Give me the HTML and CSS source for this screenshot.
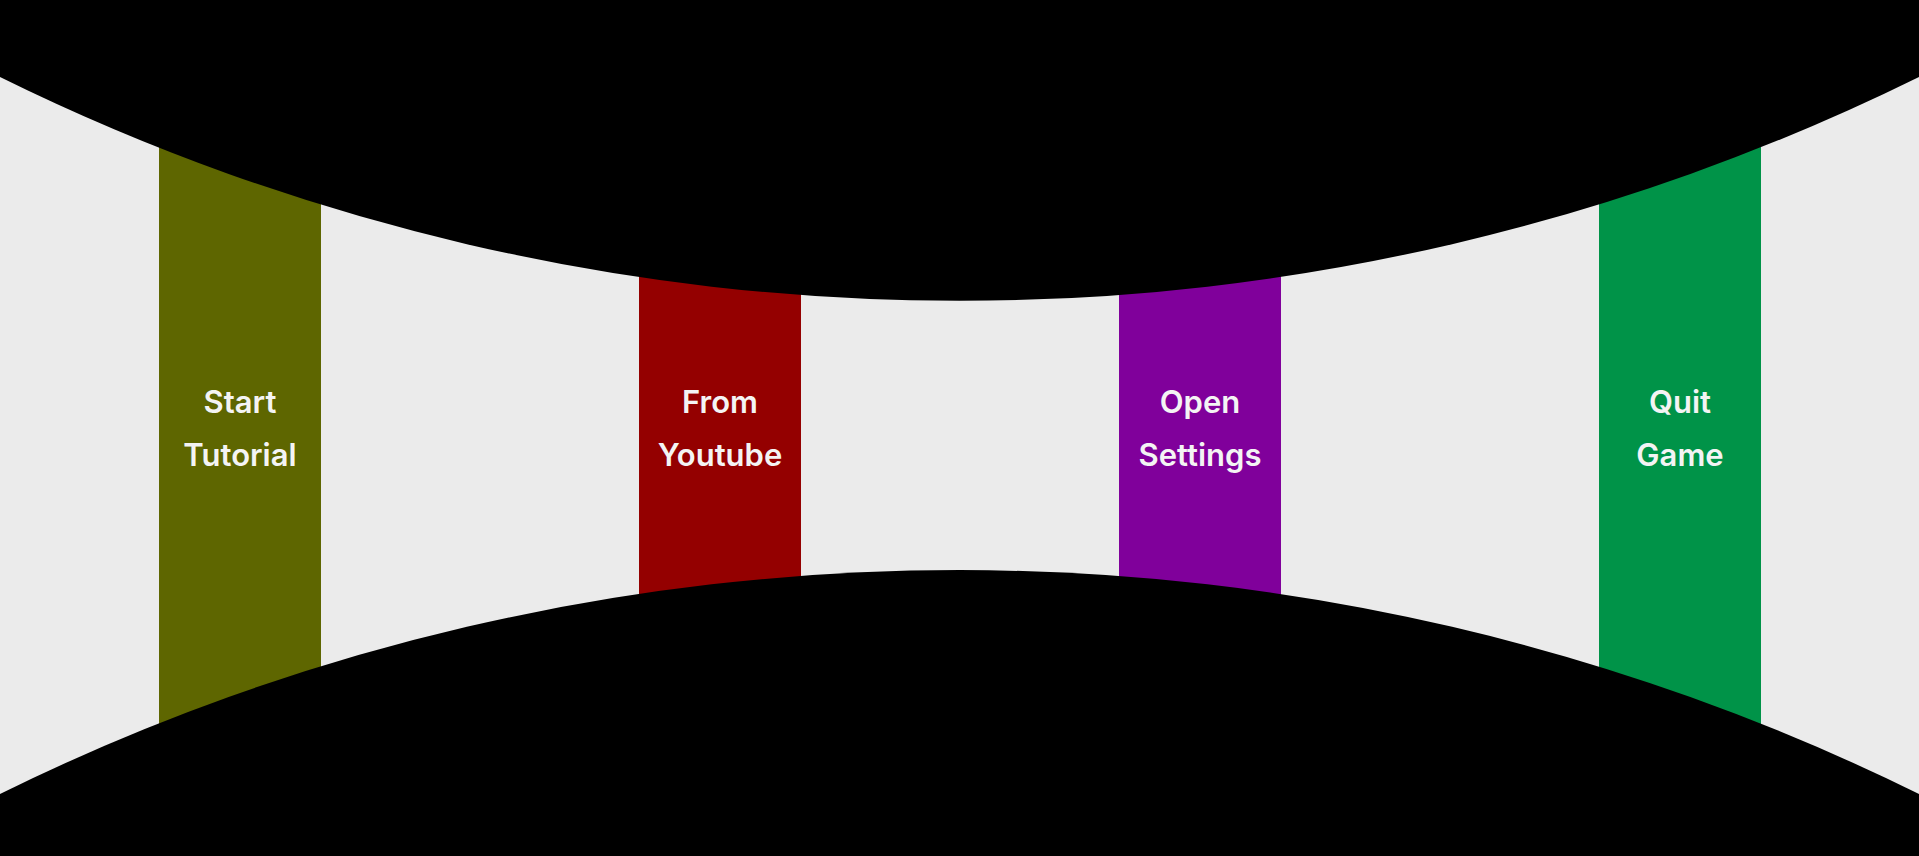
FILE: index.html
```html
<!DOCTYPE html>
<html lang="en">
<head>
<meta charset="utf-8">
<title>Main Menu</title>
<link rel="stylesheet" href="styles.css">
</head>
<body>
<main class="scene">
  <nav class="menu" aria-label="Main menu">
    <button class="stripe stripe-tutorial" type="button"><span>Start</span> <span>Tutorial</span></button>
    <button class="stripe stripe-youtube" type="button"><span>From</span> <span>Youtube</span></button>
    <button class="stripe stripe-settings" type="button"><span>Open</span> <span>Settings</span></button>
    <button class="stripe stripe-quit" type="button"><span>Quit</span> <span>Game</span></button>
  </nav>
  <svg class="curve curve-top" viewBox="0 0 1919 301" preserveAspectRatio="none" aria-hidden="true">
    <path d="M0 0V77A2168 2168 0 0 0 1919 77V0Z"/>
  </svg>
  <svg class="curve curve-bottom" viewBox="0 0 1919 286" preserveAspectRatio="none" aria-hidden="true">
    <path d="M0 286V224A2168 2168 0 0 1 1919 224V286Z"/>
  </svg>
</main>
</body>
</html>
```
FILE: styles.css
```css
body {
  margin: 0;
  background: #000000;
}

.scene {
  position: relative;
  display: grid;
  height: 100vh;
  overflow: hidden;
  background: #ebebeb;
}

.menu {
  display: grid;
  grid-template-columns: repeat(4, 1fr);
  justify-items: center;
  margin-right: -1px;
}

.stripe {
  display: flex;
  flex-direction: column;
  align-items: center;
  justify-content: center;
  width: 162px;
  padding: 0;
  border: 0;
  color: #f4f4f4;
  font-family: Inter, "Liberation Sans", sans-serif;
  font-size: 31px;
  font-weight: 600;
  line-height: 53px;
  cursor: pointer;
}

.stripe-tutorial {
  background: #5e6600;
}

.stripe-youtube {
  background: #940000;
}

.stripe-settings {
  background: #80009b;
}

.stripe-quit {
  background: #009348;
}

/* Black arcs over the top and bottom of the stripes */
.curve {
  position: absolute;
  left: 0;
  width: 100%;
  pointer-events: none;
}

.curve-top {
  top: 0;
  height: 35.16vh;
}

.curve-bottom {
  bottom: 0;
  height: 33.41vh;
}
```
